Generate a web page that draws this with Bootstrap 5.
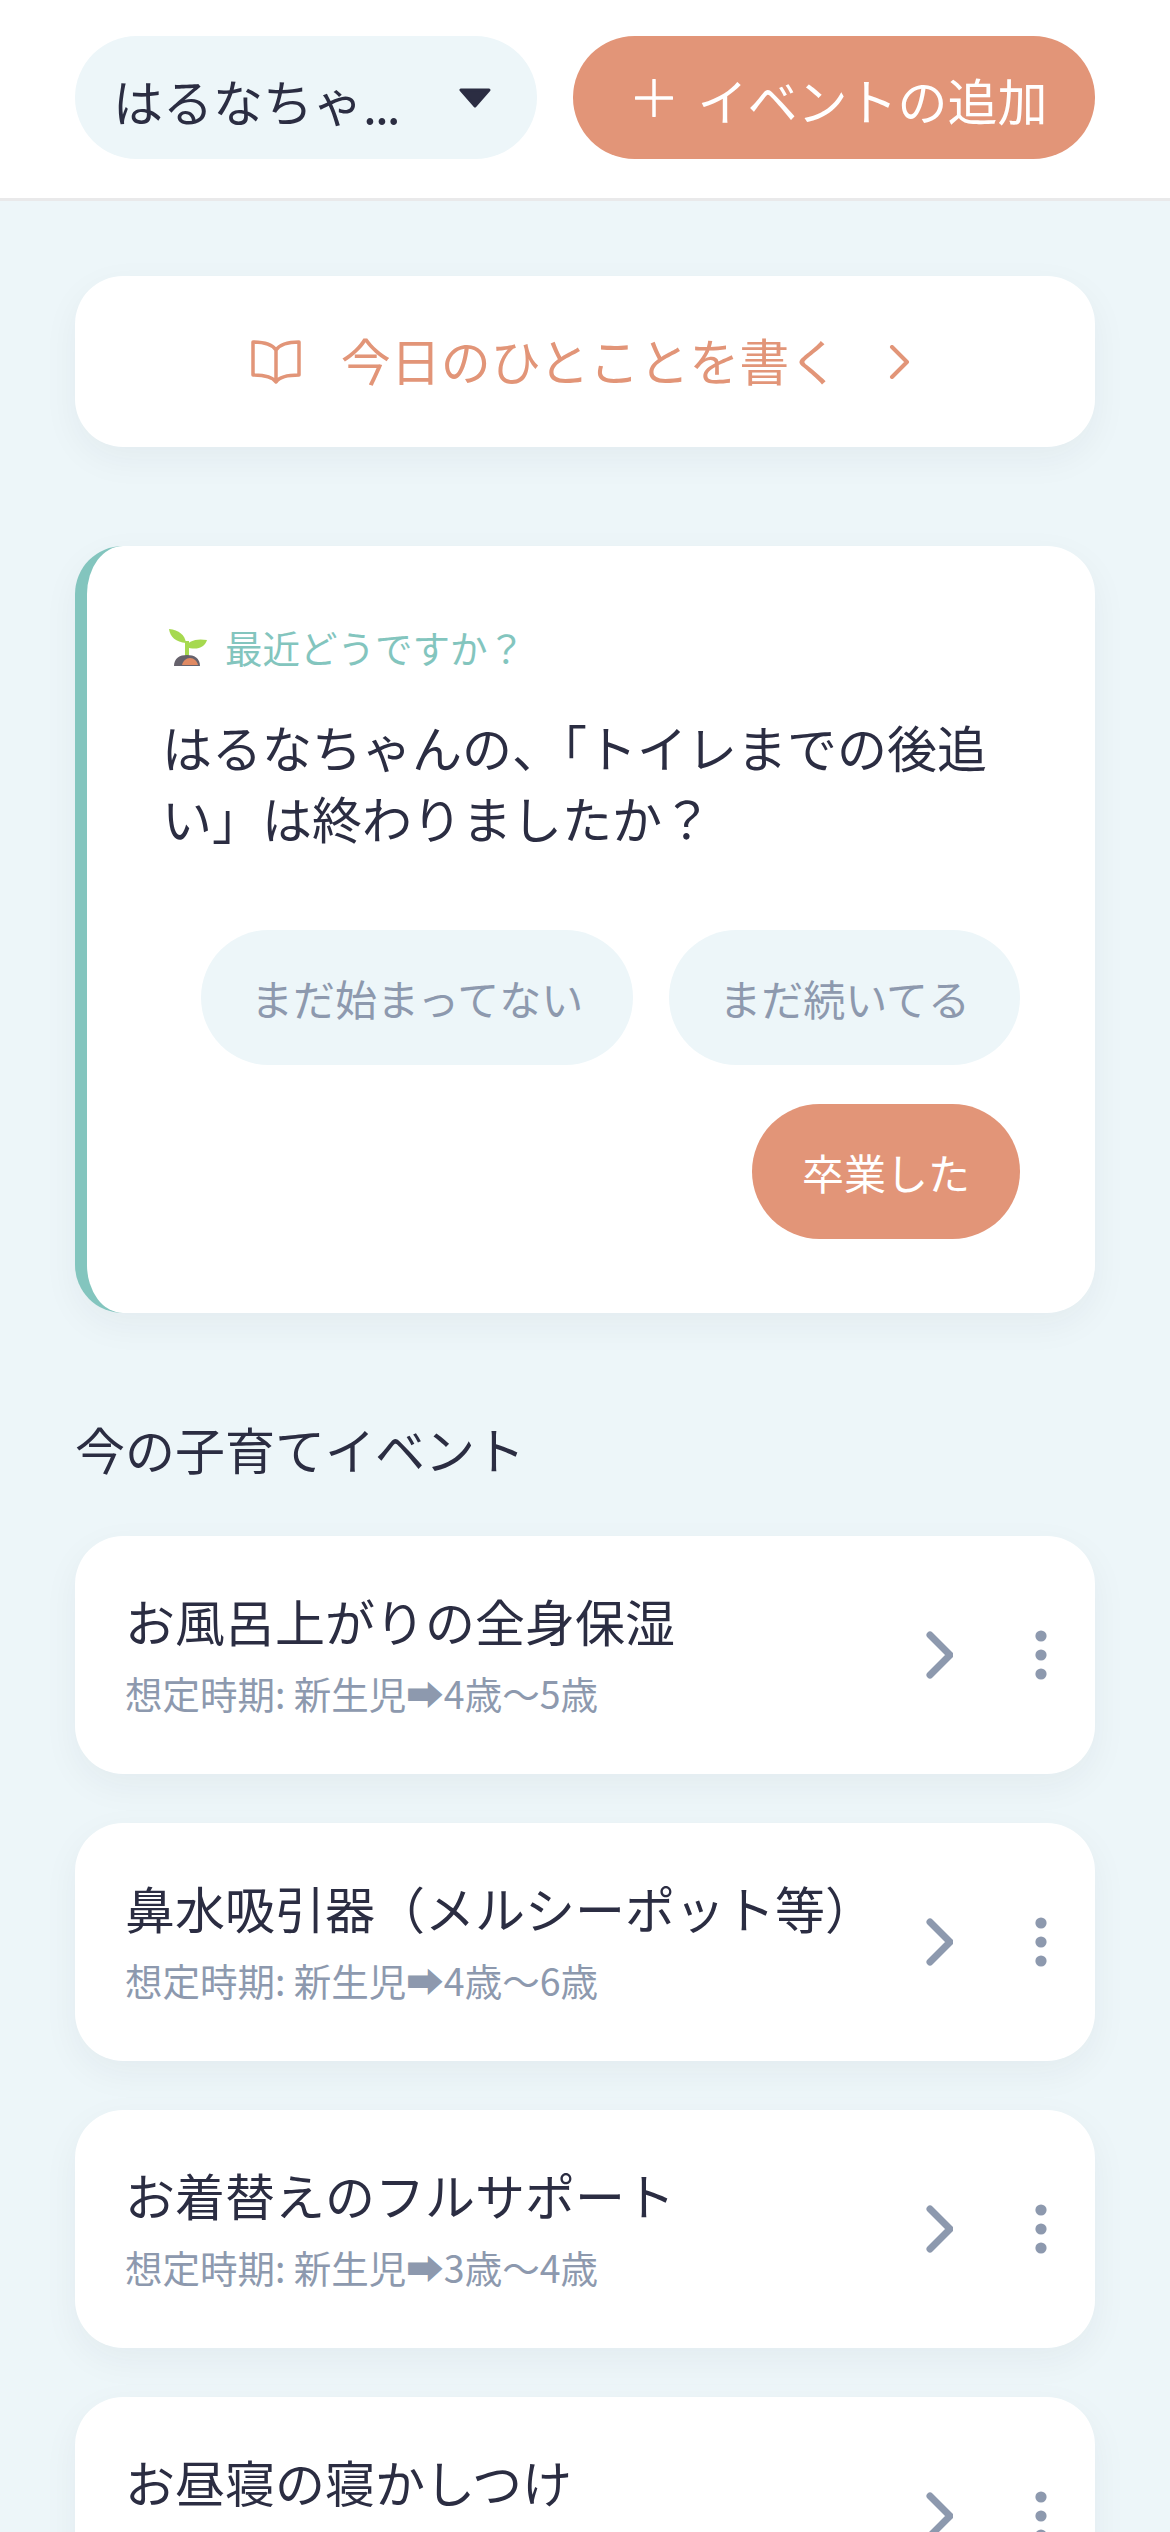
<!doctype html>
<html lang="ja">
<head>
<meta charset="utf-8">
<title>子育てイベント</title>
<link rel="stylesheet" href="https://cdn.jsdelivr.net/npm/bootstrap@5.3.0/dist/css/bootstrap.min.css">
<style>
html,body{height:2532px;overflow:hidden}
body{background:#edf6f9;color:#2b2d42;font-family:"Noto Sans CJK JP","Noto Sans",sans-serif;font-size:50px;line-height:72px}
.top-bar{background:#fff;height:201px;padding:36px 75px 0;border-bottom:3px solid #e9e9ea;gap:36px}
.kid-select{width:462px;height:123px;background:#edf6f9;border-radius:61.5px;padding:0 46px 0 38px;font-size:50px}
.kid-select span{position:relative;top:2px}
.name-dots{letter-spacing:-2px}
.add-btn{flex:1;height:123px;background:#e29578;border-radius:61.5px;color:#fff;font-size:50px;gap:25px;padding:3px 0 0 14px}
.add-btn:hover{background:#e29578;color:#fff}
.add-btn svg{margin-top:-3px}
.page-body{padding:75px 75px 0}
.panel{background:#fff;border-radius:48px;box-shadow:0 12px 36px rgba(43,45,66,.05)}
.diary-btn{height:171px;color:#e29578;font-size:50px;gap:40px;padding-right:9px}
.diary-btn span{margin-right:10px;position:relative;top:-3px}
.ask-panel{margin-top:99px;border-left:12px solid #83c5be;padding:74px 75px 75px;height:767px}
.ask-label{color:#83c5be;font-size:37.5px;line-height:54px;gap:18px;margin-left:7px}
.ask-text{font-size:50px;line-height:71px;margin:37px 0 77px}
.answer-wrap{gap:39px 36px}
.answer{height:135px;border-radius:67.5px;background:#edf6f9;color:#8d99ae;font-size:42px;padding:0 50px;border:0}
.answer-on{background:#e29578;color:#fff}
.section-title{font-size:50px;line-height:72px;margin:99px 0 52px;font-weight:400}
.event-row{height:238px;padding:0 48px 0 50px;margin-bottom:49px}
.event-name{font-size:50px;line-height:72px;margin-top:-6px}
.event-term{color:#8d99ae;font-size:37.5px;line-height:54px;margin-top:10px}
.tools{gap:82px}
</style>
</head>
<body>
<header class="top-bar d-flex align-items-start">
  <div class="kid-select d-flex align-items-center justify-content-between">
    <span>はるなちゃ<span class="name-dots">...</span></span>
    <svg width="32" height="20" viewBox="0 0 32 20" aria-hidden="true"><path d="M2 2h28L16 18z" fill="#2b2d42" stroke="#2b2d42" stroke-width="3" stroke-linejoin="round"/></svg>
  </div>
  <button type="button" class="btn add-btn d-flex align-items-center justify-content-center">
    <svg width="38" height="38" viewBox="0 0 38 38" aria-hidden="true"><path d="M19 1v36M1 19h36" stroke="#fff" stroke-width="3.5" stroke-linecap="round" fill="none"/></svg>
    <span>イベントの追加</span>
  </button>
</header>
<main class="page-body">
  <div class="panel diary-btn d-flex align-items-center justify-content-center">
    <svg width="50" height="44" viewBox="0 0 50 44" fill="none" stroke="#e29578" stroke-width="3.5" stroke-linejoin="round" stroke-linecap="round" aria-hidden="true"><path d="M25 10C21 4 12 2 2 2v33c10 0 19 1 23 7 4-6 13-7 23-7V2C38 2 29 4 25 10zM25 10v32"/></svg>
    <span>今日のひとことを書く</span>
    <svg width="21" height="34" viewBox="0 0 21 34" fill="none" stroke="#e29578" stroke-width="4" stroke-linecap="round" stroke-linejoin="round" aria-hidden="true"><path d="M3 2l15 15L3 32"/></svg>
  </div>

  <section class="panel ask-panel">
    <div class="ask-label d-flex align-items-center">
      <svg width="38" height="37" viewBox="0 0 38 37" aria-hidden="true">
        <path d="M17 14C16 6 10 1 0 0c1 8 7 13 17 14z" fill="#a6d94f"/>
        <path d="M17 18c2-6 10-9 21-7-2 7-10 11-21 7z" fill="#a6d94f"/>
        <path d="M16 12h4v16h-4z" fill="#a6d94f"/>
        <path d="M5 37c0-8 6-11 13-11s13 3 13 11z" fill="#66626c"/>
        <path d="M13 36c1-4 4-7 8-7s7 3 8 7z" fill="#e08a63"/>
      </svg>
      <span>最近どうですか？</span>
    </div>
    <p class="ask-text">はるなちゃんの、「トイレまでの後追い」は終わりましたか？</p>
    <div class="answer-wrap d-flex flex-wrap justify-content-end">
      <button type="button" class="btn answer">まだ始まってない</button>
      <button type="button" class="btn answer">まだ続いてる</button>
      <button type="button" class="btn answer answer-on">卒業した</button>
    </div>
  </section>

  <h2 class="section-title">今の子育てイベント</h2>

  <div class="panel event-row d-flex align-items-center justify-content-between">
    <div><div class="event-name">お風呂上がりの全身保湿</div><div class="event-term">想定時期: 新生児➡4歳〜5歳</div></div>
    <div class="tools d-flex align-items-center">
      <svg width="27" height="48" viewBox="0 0 27 48" fill="none" stroke="#8d99ae" stroke-width="7" stroke-linecap="round" stroke-linejoin="round" aria-hidden="true"><path d="M4 4l20 20L4 44"/></svg>
      <svg width="12" height="50" viewBox="0 0 12 50" fill="#8d99ae" aria-hidden="true"><circle cx="6" cy="6" r="5.6"/><circle cx="6" cy="25" r="5.6"/><circle cx="6" cy="44" r="5.6"/></svg>
    </div>
  </div>
  <div class="panel event-row d-flex align-items-center justify-content-between">
    <div><div class="event-name">鼻水吸引器（メルシーポット等）</div><div class="event-term">想定時期: 新生児➡4歳〜6歳</div></div>
    <div class="tools d-flex align-items-center">
      <svg width="27" height="48" viewBox="0 0 27 48" fill="none" stroke="#8d99ae" stroke-width="7" stroke-linecap="round" stroke-linejoin="round" aria-hidden="true"><path d="M4 4l20 20L4 44"/></svg>
      <svg width="12" height="50" viewBox="0 0 12 50" fill="#8d99ae" aria-hidden="true"><circle cx="6" cy="6" r="5.6"/><circle cx="6" cy="25" r="5.6"/><circle cx="6" cy="44" r="5.6"/></svg>
    </div>
  </div>
  <div class="panel event-row d-flex align-items-center justify-content-between">
    <div><div class="event-name">お着替えのフルサポート</div><div class="event-term">想定時期: 新生児➡3歳〜4歳</div></div>
    <div class="tools d-flex align-items-center">
      <svg width="27" height="48" viewBox="0 0 27 48" fill="none" stroke="#8d99ae" stroke-width="7" stroke-linecap="round" stroke-linejoin="round" aria-hidden="true"><path d="M4 4l20 20L4 44"/></svg>
      <svg width="12" height="50" viewBox="0 0 12 50" fill="#8d99ae" aria-hidden="true"><circle cx="6" cy="6" r="5.6"/><circle cx="6" cy="25" r="5.6"/><circle cx="6" cy="44" r="5.6"/></svg>
    </div>
  </div>
  <div class="panel event-row d-flex align-items-center justify-content-between">
    <div><div class="event-name">お昼寝の寝かしつけ</div><div class="event-term">&nbsp;</div></div>
    <div class="tools d-flex align-items-center">
      <svg width="27" height="48" viewBox="0 0 27 48" fill="none" stroke="#8d99ae" stroke-width="7" stroke-linecap="round" stroke-linejoin="round" aria-hidden="true"><path d="M4 4l20 20L4 44"/></svg>
      <svg width="12" height="50" viewBox="0 0 12 50" fill="#8d99ae" aria-hidden="true"><circle cx="6" cy="6" r="5.6"/><circle cx="6" cy="25" r="5.6"/><circle cx="6" cy="44" r="5.6"/></svg>
    </div>
  </div>
</main>
<script src="https://cdn.jsdelivr.net/npm/bootstrap@5.3.0/dist/js/bootstrap.bundle.min.js"></script>
</body>
</html>
